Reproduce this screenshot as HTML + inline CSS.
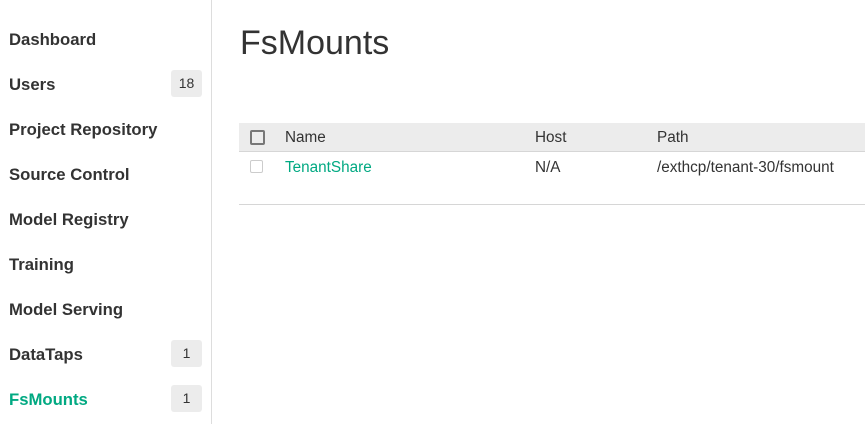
<!DOCTYPE html>
<html><head><style>
body{margin:0;width:865px;height:424px;overflow:hidden;background:#fff;font-family:"Liberation Sans",sans-serif;position:relative}
.side{position:absolute;left:0;top:0;width:211px;height:424px;border-right:1px solid #ddd}
.item{position:absolute;left:9px;font-weight:bold;font-size:16.7px;color:#333;line-height:20px}
.badge{position:absolute;left:171px;width:31px;height:27px;background:#ececec;border-radius:3px;font-size:14px;color:#333;text-align:center;line-height:27px}
h1{position:absolute;left:240px;top:21px;margin:0;font-weight:normal;font-size:34px;color:#333;line-height:44px}
.thead{position:absolute;left:239px;top:123px;width:626px;height:28px;background:#ececec;border-bottom:1px solid #d6d6d6}
.t{position:absolute;font-size:15.3px;color:#333;line-height:20px}
.cb{position:absolute;width:11px;height:11px;border:2px solid #777;border-radius:2px}
</style></head><body>
<div class="side">
<div class="item" style="top:30px">Dashboard</div>
<div class="item" style="top:75px">Users</div><div class="badge" style="top:70px">18</div>
<div class="item" style="top:120px">Project Repository</div>
<div class="item" style="top:165px">Source Control</div>
<div class="item" style="top:210px">Model Registry</div>
<div class="item" style="top:255px">Training</div>
<div class="item" style="top:300px">Model Serving</div>
<div class="item" style="top:345px">DataTaps</div><div class="badge" style="top:340px">1</div>
<div class="item" style="top:390px;color:#01a982">FsMounts</div><div class="badge" style="top:385px">1</div>
</div>
<h1>FsMounts</h1>
<div class="thead"></div>
<div class="cb" style="left:250px;top:130px"></div>
<div class="t" style="left:285px;top:128px">Name</div>
<div class="t" style="left:535px;top:128px">Host</div>
<div class="t" style="left:657px;top:128px">Path</div>
<div class="cb" style="left:250px;top:160px;border-color:#ccc;border-width:1.5px"></div>
<div class="t" style="left:285px;top:158px;color:#01a982">TenantShare</div>
<div class="t" style="left:535px;top:158px">N/A</div>
<div class="t" style="left:657px;top:158px">/exthcp/tenant-30/fsmount</div>
<div style="position:absolute;left:239px;top:204px;width:626px;height:1px;background:#d6d6d6"></div>
</body></html>
